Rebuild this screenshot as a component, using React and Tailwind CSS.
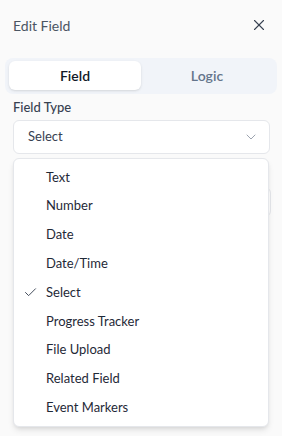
import { Check, ChevronDown, X } from "lucide-react";

const options = [
  "Text",
  "Number",
  "Date",
  "Date/Time",
  "Select",
  "Progress Tracker",
  "File Upload",
  "Related Field",
  "Event Markers",
];

export default function App() {
  const selected = "Select";

  return (
    <div
      className="w-[282px] h-[436px] bg-[#fafafa] overflow-hidden text-[#111827]"
      style={{ fontFamily: 'Lato, "Noto Sans", sans-serif' }}
    >
      {/* Header */}
      <div className="flex items-center justify-between pl-[13px] pr-[14px] h-[50px]">
        <span className="text-[14px] text-[#4b5563]">Edit Field</span>
        <X className="w-[18px] h-[18px] text-[#374151]" strokeWidth={1.5} />
      </div>

      {/* Tabs */}
      <div className="mx-[5px] mt-[8px] h-[36px] rounded-lg bg-[#f1f4f9] pt-[3px] px-[4px] flex">
        <button className="flex-1 h-[29px] rounded-md bg-white shadow-sm text-[14px] font-semibold text-[#111827]">
          Field
        </button>
        <button className="flex-1 h-[29px] text-[14px] font-semibold text-[#64748b]">
          Logic
        </button>
      </div>

      {/* Field type */}
      <div className="px-[13px] pt-[3px]">
        <label className="block text-[13px] font-medium text-[#374151] leading-[20px]">
          Field Type
        </label>
        <div className="relative mt-[3px]">
          <div className="h-[34px] w-[257px] rounded-md border border-[#e5e7eb] bg-white flex items-center justify-between pl-[14px] pr-[10px]">
            <span className="text-[13px] text-[#374151]">Select</span>
            <ChevronDown className="w-[16px] h-[16px] text-[#9ca3af]" strokeWidth={1.5} />
          </div>

          {/* field beneath the open list */}
          <div className="mt-[33px] h-[30px] w-[258px] rounded-md border border-[#e5e7eb] bg-white" />

          {/* Dropdown */}
          <div className="absolute left-0 top-[38px] w-[256px] rounded-md border border-[#e5e7eb] bg-white shadow-md py-[4px]">
            {options.map((opt) => (
              <div key={opt} className="relative h-[28.8px] flex items-center pl-[32px] text-[13px] text-[#1f2937]">
                {opt === selected && (
                  <Check className="absolute left-[9px] w-[15px] h-[15px] text-[#374151]" strokeWidth={1.5} />
                )}
                {opt}
              </div>
            ))}
          </div>
        </div>
      </div>
    </div>
  );
}
